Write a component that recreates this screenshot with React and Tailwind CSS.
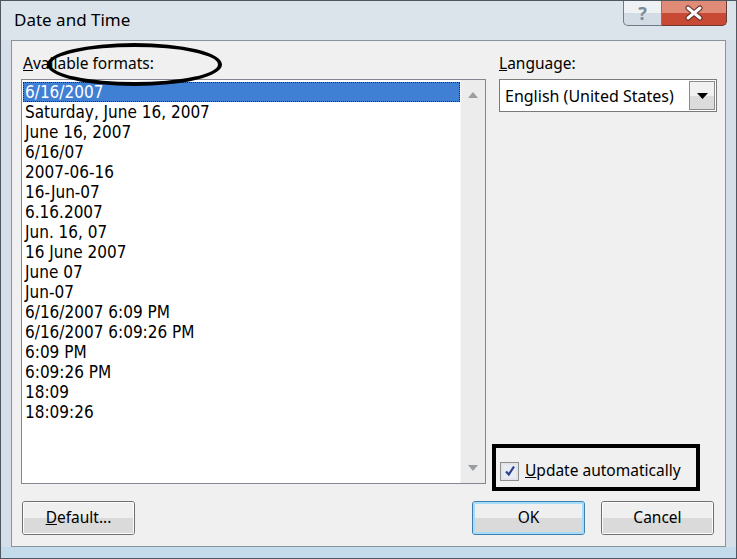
import React from 'react';

const formats = [
    '6/16/2007',
    'Saturday, June 16, 2007',
    'June 16, 2007',
    '6/16/07',
    '2007-06-16',
    '16-Jun-07',
    '6.16.2007',
    'Jun. 16, 07',
    '16 June 2007',
    'June 07',
    'Jun-07',
    '6/16/2007 6:09 PM',
    '6/16/2007 6:09:26 PM',
    '6:09 PM',
    '6:09:26 PM',
    '18:09',
    '18:09:26',
];

const uiFont = { fontFamily: '"Noto Sans", "Open Sans", sans-serif' };
const listFont = { fontFamily: '"DejaVu Sans Condensed", "DejaVu Sans", sans-serif' };

const DlgButton = ({ children, focused, className = '' }) => (
    <button
        className={`relative h-[34px] w-[113px] rounded-[3px] border text-[15.5px] text-black overflow-hidden bg-[#d9d9d9] ${focused ? 'border-[#3c7fb1]' : 'border-[#707070]'} ${className}`}
        style={uiFont}
    >
        <div className={`absolute inset-0 flex flex-col ${focused ? 'border-2 border-[#a6dcf7]' : 'border border-[#fbfbfb]'}`}>
            <div className="h-1/2 bg-[#efefef]" />
            <div className="h-1/2 bg-[#dadada]" />
        </div>
        <span className="relative flex items-center justify-center">{children}</span>
    </button>
);

export default function App() {
    return (
        <div className="w-[737px] h-[559px] relative overflow-hidden bg-[#d6dfe7] border border-[#4c5761] flex flex-col">
            {/* title bar */}
            <div className="h-[39px] flex items-start bg-[#dce4eb]">
                <span className="ml-[13px] mt-[6px] text-[17px] text-black" style={uiFont}>Date and Time</span>
                <div className="flex-1" />
                <div className="w-[39px] h-[25px] rounded-bl-[5px] border border-t-0 border-[#6f7b86] bg-[#d3dce4] overflow-hidden relative">
                    <div className="h-[12px] bg-[#eef2f5]" />
                    <span className="absolute inset-0 flex items-center justify-center text-[18px] font-bold text-[#7d8b99] leading-none" style={uiFont}>?</span>
                </div>
                <div className="mr-[9px] w-[65px] h-[25px] rounded-br-[5px] border border-t-0 border-l-0 border-[#6b3a33] bg-[#c94a34] overflow-hidden relative flex flex-col">
                    <div className="h-[12px] shrink-0 bg-[#e08a78]" />
                    <svg className="absolute left-[21px] top-[4px]" width="22" height="16" viewBox="0 0 22 16">
                        <path d="M5 3 L17 13 M17 3 L5 13" stroke="#5a2a24" strokeWidth="5" strokeLinecap="round" />
                        <path d="M5 3 L17 13 M17 3 L5 13" stroke="#ffffff" strokeWidth="3" strokeLinecap="round" />
                    </svg>
                </div>
            </div>

            {/* client area */}
            <div className="flex-1 mx-[10px] border border-[#8a949c] bg-[#f0f0f0] flex flex-col">
                <div className="flex gap-[13px] pl-[9px] pt-[13px]">
                    {/* left column */}
                    <div className="w-[465px] flex flex-col">
                        <div className="h-[20px] flex items-center pl-[2px] text-[15.5px] text-black" style={uiFont}>
                            <span><u>A</u>vailable formats:</span>
                        </div>
                        <div className="mt-[5px] h-[405px] border border-[#828790] bg-white flex">
                            <div className="flex-1 pt-[2px] pl-px">
                                {formats.map((f, i) => (
                                    <div
                                        key={f}
                                        className={`h-[20px] flex items-center text-[17px] leading-none ${i === 0 ? 'bg-[#3f80d4] text-white border border-dotted border-[#2a2a2a] pl-px' : 'text-black pl-[2px]'}`}
                                        style={listFont}
                                    >
                                        {f}
                                    </div>
                                ))}
                            </div>
                            <div className="w-[25px] bg-[#ececec] border-l border-[#f7f7f7] flex flex-col justify-between items-center py-[12px]">
                                <svg width="10" height="6" viewBox="0 0 10 6"><path d="M0 6 L5 0 L10 6 Z" fill="#9a9ea3" /></svg>
                                <svg width="10" height="6" viewBox="0 0 10 6"><path d="M0 0 L10 0 L5 6 Z" fill="#9a9ea3" /></svg>
                            </div>
                        </div>
                    </div>

                    {/* right column */}
                    <div className="w-[218px] flex flex-col">
                        <div className="h-[20px] flex items-center text-[15.5px] text-black" style={uiFont}>
                            <span><u>L</u>anguage:</span>
                        </div>
                        <div className="mt-[5px] h-[33px] border border-[#7a7a7a] bg-white flex items-center justify-between pl-[5px] pr-px">
                            <span className="text-[16px] text-black" style={uiFont}>English (United States)</span>
                            <div className="w-[26px] h-[29px] border border-[#8b8b8b] bg-[#dcdcdc] relative">
                                <div className="h-1/2 bg-[#f1f1f1]" />
                                <svg className="absolute left-[7px] top-[11px]" width="11" height="6" viewBox="0 0 11 6"><path d="M0 0 L11 0 L5.5 6 Z" fill="#000" /></svg>
                            </div>
                        </div>
                        <div className="flex-1" />
                        <div className="h-[20px] mb-[3px] flex items-center gap-[6px] pl-px">
                            <div className="w-[19px] h-[19px] border border-[#8e8f8f] bg-[#e2e4e8] p-[2px]">
                                <div className="w-full h-full bg-[#e8ecf4] flex items-center justify-center">
                                    <svg width="12" height="12" viewBox="0 0 12 12"><path d="M2 6.5 L4.8 9.5 L10 1.5" stroke="#2d3f8f" strokeWidth="2.2" fill="none" /></svg>
                                </div>
                            </div>
                            <span className="text-[15.5px] text-black" style={uiFont}><u>U</u>pdate automatically</span>
                        </div>
                    </div>
                </div>

                <div className="flex-1" />

                {/* buttons */}
                <div className="flex items-center pl-[10px] pr-[11px] mb-[11px]">
                    <DlgButton><span><u>D</u>efault...</span></DlgButton>
                    <div className="flex-1" />
                    <DlgButton focused>OK</DlgButton>
                    <DlgButton className="ml-[16px]">Cancel</DlgButton>
                </div>
            </div>
            {/* bottom frame strip */}
            <div className="h-[11px] bg-[#c3dbeb]" />

            {/* annotations drawn over the dialog */}
            <div className="absolute left-[46px] top-[42px] w-[175px] h-[43px] rounded-[50%] border-[4px] border-black" />
            <div className="absolute left-[491px] top-[443px] w-[208px] h-[47px] border-[4px] border-black" />
        </div>
    );
}
